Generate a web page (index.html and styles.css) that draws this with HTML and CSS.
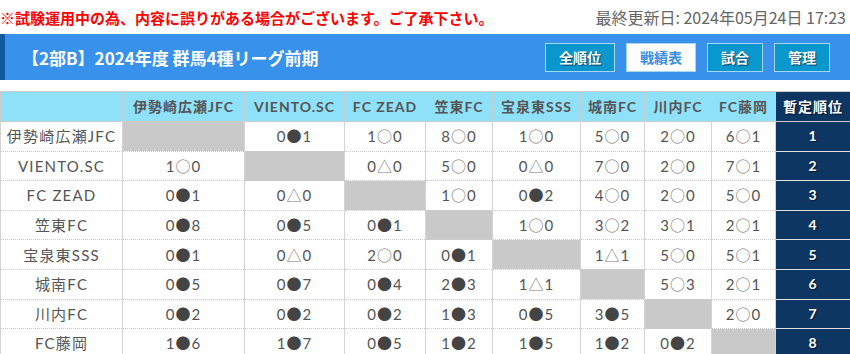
FILE: index.html
```html
<!DOCTYPE html>
<html lang="ja">
<head>
<meta charset="utf-8">
<title>戦績表</title>
<link rel="stylesheet" href="styles.css">
</head>
<body>
<div class="notice-row">
  <p class="notice">※試験運用中の為、内容に誤りがある場合がございます。ご了承下さい。</p>
  <p class="updated">最終更新日: 2024年05月24日 17:23</p>
</div>
<header class="titlebar">
  <h1 class="title">【2部B】2024年度 群馬4種リーグ前期</h1>
  <nav class="tabs">
    <a class="tab">全順位</a>
    <a class="tab active">戦績表</a>
    <a class="tab">試合</a>
    <a class="tab">管理</a>
  </nav>
</header>
<table class="standings">
  <colgroup>
    <col class="c-team"><col class="c-1"><col class="c-2"><col class="c-3"><col class="c-4"><col class="c-5"><col class="c-6"><col class="c-7"><col class="c-8"><col class="c-rank">
  </colgroup>
  <thead>
    <tr>
      <th></th>
      <th>伊勢崎広瀬JFC</th><th>VIENTO.SC</th><th>FC ZEAD</th><th>笠東FC</th><th>宝泉東SSS</th><th>城南FC</th><th>川内FC</th><th>FC藤岡</th>
      <th class="rank">暫定順位</th>
    </tr>
  </thead>
  <tbody>
    <tr><td class="team">伊勢崎広瀬JFC</td><td class="self"></td><td>0<span class="mk lose">●</span>1</td><td>1<span class="mk win">○</span>0</td><td>8<span class="mk win">○</span>0</td><td>1<span class="mk win">○</span>0</td><td>5<span class="mk win">○</span>0</td><td>2<span class="mk win">○</span>0</td><td>6<span class="mk win">○</span>1</td><td class="rank">1</td></tr>
    <tr><td class="team">VIENTO.SC</td><td>1<span class="mk win">○</span>0</td><td class="self"></td><td>0<span class="mk draw">△</span>0</td><td>5<span class="mk win">○</span>0</td><td>0<span class="mk draw">△</span>0</td><td>7<span class="mk win">○</span>0</td><td>2<span class="mk win">○</span>0</td><td>7<span class="mk win">○</span>1</td><td class="rank">2</td></tr>
    <tr><td class="team">FC ZEAD</td><td>0<span class="mk lose">●</span>1</td><td>0<span class="mk draw">△</span>0</td><td class="self"></td><td>1<span class="mk win">○</span>0</td><td>0<span class="mk lose">●</span>2</td><td>4<span class="mk win">○</span>0</td><td>2<span class="mk win">○</span>0</td><td>5<span class="mk win">○</span>0</td><td class="rank">3</td></tr>
    <tr><td class="team">笠東FC</td><td>0<span class="mk lose">●</span>8</td><td>0<span class="mk lose">●</span>5</td><td>0<span class="mk lose">●</span>1</td><td class="self"></td><td>1<span class="mk win">○</span>0</td><td>3<span class="mk win">○</span>2</td><td>3<span class="mk win">○</span>1</td><td>2<span class="mk win">○</span>1</td><td class="rank">4</td></tr>
    <tr><td class="team">宝泉東SSS</td><td>0<span class="mk lose">●</span>1</td><td>0<span class="mk draw">△</span>0</td><td>2<span class="mk win">○</span>0</td><td>0<span class="mk lose">●</span>1</td><td class="self"></td><td>1<span class="mk draw">△</span>1</td><td>5<span class="mk win">○</span>0</td><td>5<span class="mk win">○</span>1</td><td class="rank">5</td></tr>
    <tr><td class="team">城南FC</td><td>0<span class="mk lose">●</span>5</td><td>0<span class="mk lose">●</span>7</td><td>0<span class="mk lose">●</span>4</td><td>2<span class="mk lose">●</span>3</td><td>1<span class="mk draw">△</span>1</td><td class="self"></td><td>5<span class="mk win">○</span>3</td><td>2<span class="mk win">○</span>1</td><td class="rank">6</td></tr>
    <tr><td class="team">川内FC</td><td>0<span class="mk lose">●</span>2</td><td>0<span class="mk lose">●</span>2</td><td>0<span class="mk lose">●</span>2</td><td>1<span class="mk lose">●</span>3</td><td>0<span class="mk lose">●</span>5</td><td>3<span class="mk lose">●</span>5</td><td class="self"></td><td>2<span class="mk win">○</span>0</td><td class="rank">7</td></tr>
    <tr><td class="team">FC藤岡</td><td>1<span class="mk lose">●</span>6</td><td>1<span class="mk lose">●</span>7</td><td>0<span class="mk lose">●</span>5</td><td>1<span class="mk lose">●</span>2</td><td>1<span class="mk lose">●</span>5</td><td>1<span class="mk lose">●</span>2</td><td>0<span class="mk lose">●</span>2</td><td class="self"></td><td class="rank">8</td></tr>
  </tbody>
</table>
</body>
</html>
```

FILE: styles.css
```css
body {
  margin: 0;
  font-family: "Noto Sans CJK JP", sans-serif;
  background: #fff;
}

.notice-row {
  display: flex;
  justify-content: space-between;
  align-items: center;
  height: 34px;
  padding: 0 4px 0 0;
}

.notice {
  margin: 0;
  color: #f00;
  font-size: 15px;
  font-weight: bold;
}

.updated {
  margin: 0;
  color: #666;
  font-size: 16px;
}

.titlebar {
  display: flex;
  align-items: center;
  justify-content: space-between;
  height: 46px;
  background: #3891ea;
  border-left: 5px solid #0e5a9e;
  padding: 0 20px 0 17px;
}

.title {
  margin: 0;
  color: #fff;
  font-size: 17px;
  font-weight: bold;
}

.tabs {
  display: flex;
  gap: 11px;
}

.tab {
  display: block;
  box-sizing: border-box;
  height: 29px;
  padding: 0 13px;
  border: 1px solid #a6d6f0;
  background: #0a97cd;
  color: #fff;
  font-size: 14px;
  font-weight: bold;
  line-height: 27px;
  text-shadow: 1px 1px 1px rgba(0, 0, 0, 0.55);
}

.tab.active {
  background: #fff;
  color: #3a8ee2;
  text-shadow: none;
}

.standings {
  margin-top: 11px;
  width: 850px;
  border-collapse: collapse;
  table-layout: fixed;
  font-family: Lato, "Noto Sans CJK JP", sans-serif;
  color: #555;
}

.c-team { width: 122px; }
.c-1 { width: 122px; }
.c-2 { width: 100px; }
.c-3 { width: 81px; }
.c-4 { width: 67px; }
.c-5 { width: 88px; }
.c-6 { width: 64px; }
.c-7 { width: 67px; }
.c-8 { width: 64px; }
.c-rank { width: 75px; }

.standings th {
  height: 29px;
  padding: 0;
  background: #8fe1f9;
  border: 1px solid #ccc;
  font-size: 14px;
  font-weight: bold;
  letter-spacing: 1px;
  white-space: nowrap;
  text-align: center;
  line-height: 20px;
}

.standings td {
  height: 28.6px;
  padding: 0;
  border-left: 1px solid #d4d4d4;
  border-right: 1px solid #d4d4d4;
  border-bottom: 1px dotted #ccc;
  font-size: 15px;
  line-height: 20px;
  letter-spacing: 1px;
  text-align: center;
  white-space: nowrap;
}

.standings td.team {
  letter-spacing: 1.2px;
}

.mk {
  font-family: "Noto Sans CJK JP", sans-serif;
  font-size: 15px;
  letter-spacing: 0;
  margin-right: 1px;
}

.mk.lose {
  color: #444;
}

.mk.win,
.mk.draw {
  color: #777;
}

.standings td.self {
  background: #c9c9c9;
}

.standings .rank {
  background: #0d3663;
  color: #fff;
  font-weight: bold;
  font-size: 14px;
  text-shadow: 1px 1px 1px rgba(0, 0, 0, 0.6);
}

.standings td.rank {
  border-bottom: 1px solid #e3e3e3;
}
```
